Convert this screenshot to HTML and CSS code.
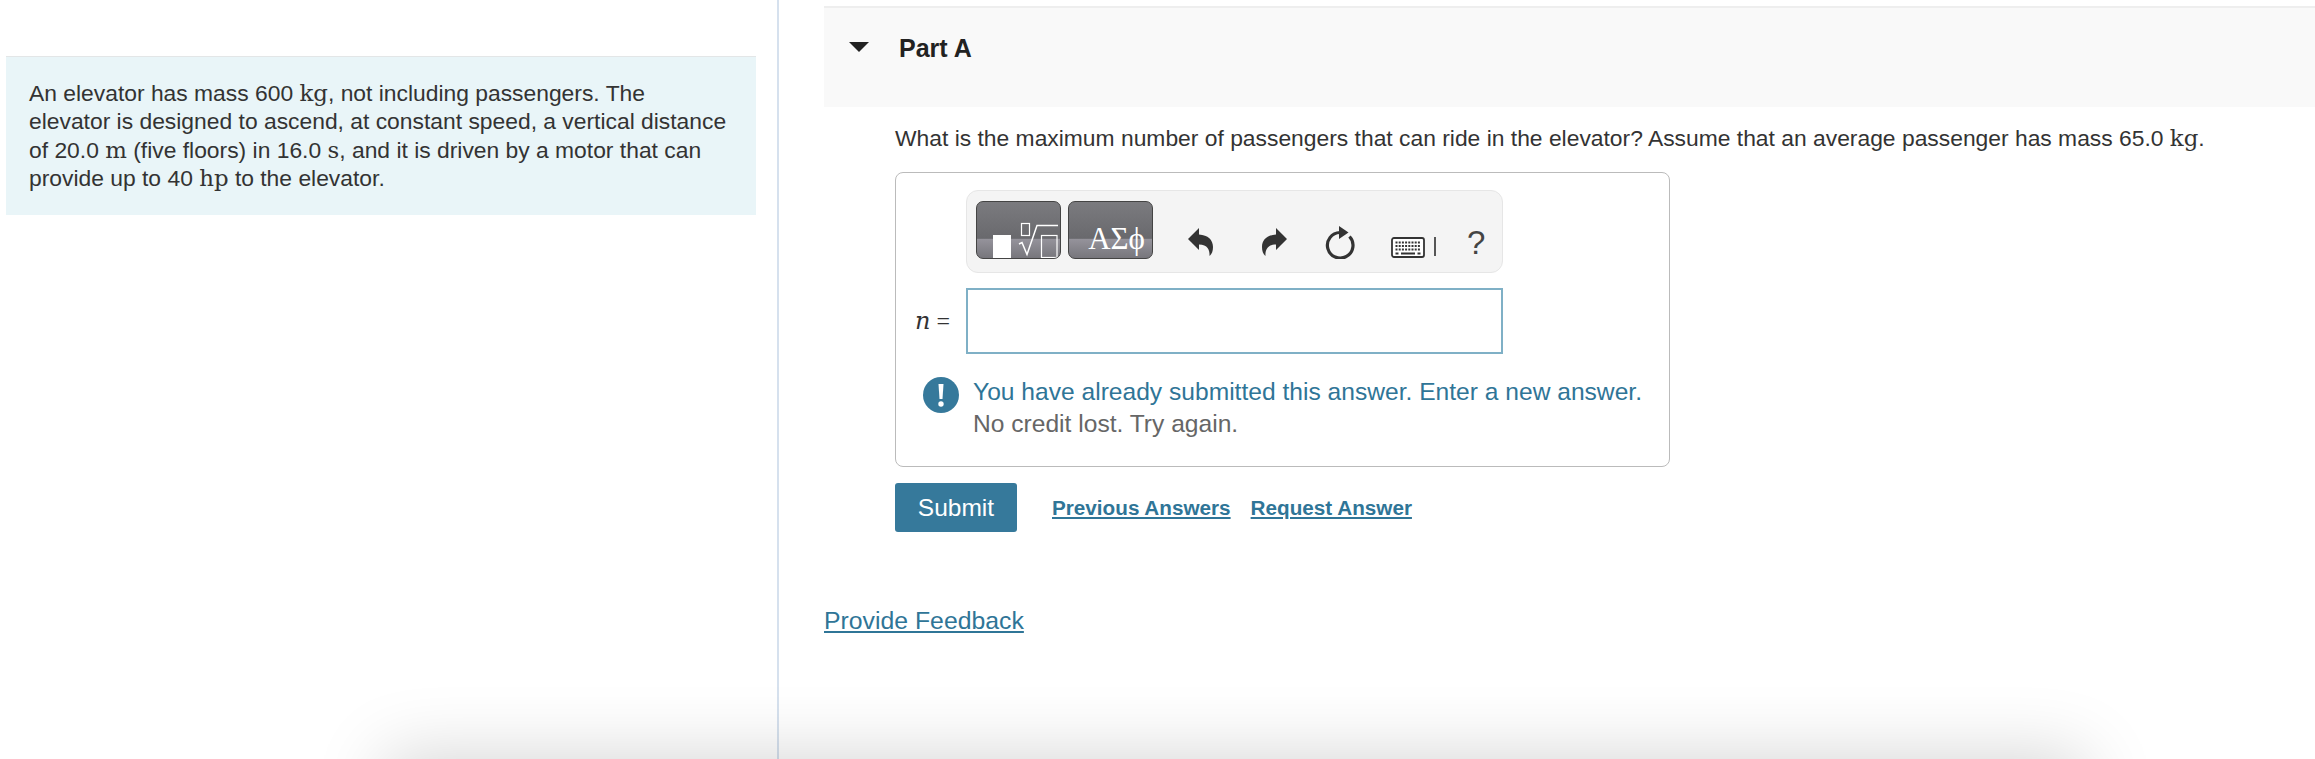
FILE: index.html
```html
<!DOCTYPE html>
<html lang="en">
<head>
  <meta charset="UTF-8">
  <title>Elevator Problem</title>
  <link rel="stylesheet" href="styles.css">
</head>
<body>
  <div class="page">
    <aside class="intro-col">
      <div class="intro">
        An elevator has mass 600 <span class="math">kg</span>, not including passengers. The<br>
        elevator is designed to ascend, at constant speed, a vertical distance<br>
        of 20.0 <span class="math">m</span> (five floors) in 16.0 <span class="math">s</span>, and it is driven by a motor that can<br>
        provide up to 40 <span class="math">hp</span> to the elevator.
      </div>
    </aside>
    <main class="part-col">
      <div class="part-head">
        <span class="caret"></span>
        <h2>Part A</h2>
      </div>
      <div class="part-body">
        <p class="question">What is the maximum number of passengers that can ride in the elevator? Assume that an average passenger has mass 65.0 <span class="math">kg</span>.</p>
        <div class="answer-box">
          <div class="toolbar">
            <button type="button" class="tpl-btn">
              <svg width="83" height="56" viewBox="0 0 83 56">
                <rect x="16" y="33" width="18" height="23" fill="#fff"/>
                <rect x="44.5" y="21.5" width="8" height="12" fill="none" stroke="#fff" stroke-width="1.2"/>
                <path d="M42 42l3-1.500 5 12 10-29h21" fill="none" stroke="#fff" stroke-width="1.500"/>
                <rect x="64.500" y="33.500" width="15.500" height="22" fill="none" stroke="#fff" stroke-width="1.200"/>
              </svg>
            </button>
            <button type="button" class="tpl-btn tpl-greek">ΑΣϕ</button>
            <svg class="undo" width="25" height="28" viewBox="0 0 25 28"><path d="M0 11L11 0v6.500C20 7 25 12 25 19c0 4-1 7-3.500 9 .5-6-2-11.500-10.500-11.500V22z" fill="#333"/></svg>
            <svg class="redo" width="25" height="28" viewBox="0 0 25 28"><path d="M25 11L14 0v6.500C5 7 0 12 0 19c0 4 1 7 3.500 9-.5-6 2-11.500 10.500-11.500V22z" fill="#333"/></svg>
            <svg class="reset" width="30" height="33" viewBox="0 0 30 33">
              <path d="M15 6.500A12.800 12.800 0 1 0 24.500 10.500" fill="none" stroke="#333" stroke-width="3.200"/>
              <path d="M14 0l9.500 6.500L14 13z" fill="#333"/>
            </svg>
            <svg class="keys" width="34" height="21" viewBox="0 0 34 21">
              <rect x="1" y="1" width="32" height="19" rx="2" fill="#fff" stroke="#333" stroke-width="1.800"/>
              <path d="M4.500 5.500h25M4.500 9h25M4.500 12.500h25" stroke="#333" stroke-width="2" stroke-dasharray="2 1.200"/>
              <path d="M4.500 16.500h3M10 16.500h14M26.500 16.500h3" stroke="#333" stroke-width="2"/>
            </svg>
            <span class="kbd-bar"></span>
            <span class="help">?</span>
          </div>
          <div class="answer-row">
            <label class="var" for="answer"><i>n</i> =</label>
            <input type="text" id="answer" class="answer-input">
          </div>
          <div class="feedback">
            <svg class="alert-icon" width="36" height="36" viewBox="0 0 36 36">
              <circle cx="18" cy="18" r="18" fill="#36799b"/>
              <path d="M15.500 7h5l-1 15h-3z" fill="#fff"/>
              <circle cx="18" cy="27" r="2.700" fill="#fff"/>
            </svg>
            <div>
              <div class="feedback-title">You have already submitted this answer. Enter a new answer.</div>
              <div class="feedback-note">No credit lost. Try again.</div>
            </div>
          </div>
        </div>
        <div class="actions">
          <button type="button" class="submit">Submit</button>
          <a href="#" class="action-link">Previous Answers</a>
          <a href="#" class="action-link">Request Answer</a>
        </div>
      </div>
      <a href="#" class="feedback-link">Provide Feedback</a>
    </main>
    <div class="bottom-shadow"></div>
  </div>
</body>
</html>
```

FILE: styles.css
```css
* { box-sizing: border-box; }
html, body {
  height: 100%;
  overflow: hidden;
}
body {
  margin: 0;
  background: #fff;
  font-family: "Liberation Sans", Arial, sans-serif;
  color: #333;
}
.page {
  position: relative;
  display: flex;
  height: 759px;
  overflow: hidden;
}
.math {
  font-family: "DejaVu Serif", "Liberation Serif", serif;
}

/* Left column */
.intro-col {
  width: 779px;
  flex: none;
  padding: 56px 0 0 6px;
  border-right: 2px solid #d6e1ee;
}
.intro {
  width: 750px;
  height: 159px;
  padding: 22px 23px 0;
  background: #e9f5f8;
  border-top: 1px solid #e3e6e7;
  font-size: 22.85px;
  line-height: 28.4px;
}

/* Right column */
.part-col {
  flex: 1;
  padding: 6px 0 0 45px;
}
.part-head {
  display: flex;
  height: 101px;
  padding: 26px 0 0 25px;
  background: #f9f9f9;
  border-top: 2px solid #eee;
}
.caret {
  width: 0;
  height: 0;
  margin-top: 8px;
  border-left: 10px solid transparent;
  border-right: 10px solid transparent;
  border-top: 10px solid #222;
}
.part-head h2 {
  margin: 0 0 0 30px;
  font-size: 25px;
  line-height: 28px;
  color: #222;
}
.part-body {
  padding-left: 71px;
}
.question {
  margin: 13px 0 16px;
  font-size: 22.85px;
  line-height: 36px;
  white-space: nowrap;
}
.answer-box {
  width: 775px;
  height: 295px;
  padding: 17px 0 0 70px;
  border: 1px solid #bbb;
  border-radius: 8px;
}
.toolbar {
  display: flex;
  align-items: flex-start;
  width: 537px;
  height: 83px;
  padding: 10px 0 0 9px;
  background: #f4f4f4;
  border: 1px solid #e6e6e6;
  border-radius: 12px;
}
.tpl-btn {
  width: 85px;
  height: 58px;
  margin: 0 7px 0 0;
  padding: 0;
  border: 1px solid #444;
  border-radius: 7px;
  background: linear-gradient(to bottom, #7b7b7f, #69696d 65%, #95939b 66%, #77767c);
  overflow: hidden;
}
.tpl-btn svg { display: block; }
.tpl-greek {
  padding: 17px 0 0 12px;
  color: #fff;
  font-family: "Liberation Serif", serif;
  font-size: 31px;
  line-height: 30px;
}
.undo { margin: 27px 0 0 28px; }
.redo { margin: 27px 0 0 49px; }
.reset { margin: 25px 0 0 38px; }
.keys { margin: 36px 0 0 36px; }
.kbd-bar {
  width: 2px;
  height: 19px;
  margin: 36px 0 0 9px;
  background: #555;
}
.help {
  margin: 25px 0 0 31px;
  font-size: 33px;
  line-height: 34px;
  color: #444;
}
.answer-row {
  display: flex;
  align-items: center;
  margin: 15px 0 0 -70px;
}
.var {
  width: 70px;
  padding-left: 19px;
  font-family: "Liberation Serif", serif;
  font-size: 24px;
}
.var i {
  font-family: "DejaVu Serif", serif;
}
.answer-input {
  width: 537px;
  height: 66px;
  border: 2px solid #7fb0c6;
  background: #fff;
}
.feedback {
  display: flex;
  margin: 22px 0 0 -43px;
  font-size: 24.6px;
  line-height: 32px;
}
.alert-icon {
  flex: none;
  margin: 1px 14px 0 0;
}
.feedback-title { color: #2f7597; }
.feedback-note { color: #666; }
.actions {
  display: flex;
  align-items: center;
  margin-top: 16px;
}
.submit {
  width: 122px;
  height: 49px;
  margin-right: 35px;
  border: none;
  border-radius: 3px;
  background: #36799b;
  color: #fff;
  font-family: inherit;
  font-size: 24.5px;
}
.action-link {
  margin-right: 20px;
  font-size: 20.7px;
  font-weight: bold;
  color: #2f7597;
}
.feedback-link {
  display: inline-block;
  margin-top: 75px;
  font-size: 24.8px;
  color: #2f7597;
}

.bottom-shadow {
  position: absolute;
  left: 435px;
  bottom: 0;
  width: 1600px;
  height: 0;
  border-radius: 30px;
  box-shadow: 0 46px 70px 50px rgba(0, 0, 0, 0.17);
}
```
